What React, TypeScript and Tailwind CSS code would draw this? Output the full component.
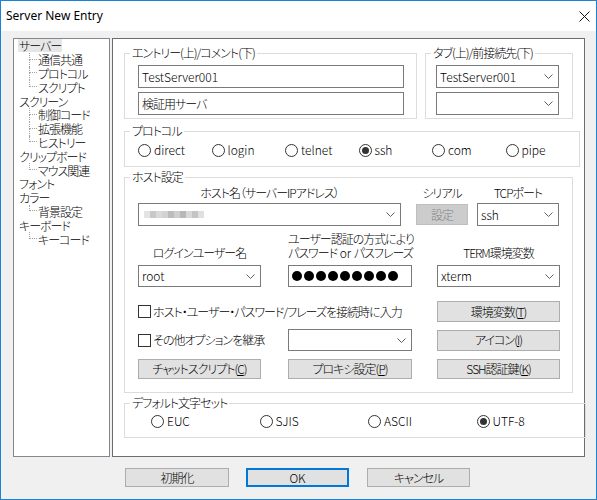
import React from "react";

const FONT = "font-['Noto_Sans_CJK_JP',sans-serif] font-light [font-feature-settings:'palt'] tracking-[-1px] whitespace-nowrap";

const TREE = [
  { label: "サーバー", children: ["通信共通", "プロトコル", "スクリプト"] },
  { label: "スクリーン", children: ["制御コード", "拡張機能", "ヒストリー"] },
  { label: "クリップボード", children: ["マウス関連"] },
  { label: "フォント", children: [] },
  { label: "カラー", children: ["背景設定"] },
  { label: "キーボード", children: ["キーコード"] },
];

const PROTOCOLS = ["direct", "login", "telnet", "ssh", "com", "pipe"];
const CHARSETS = ["EUC", "SJIS", "ASCII", "UTF-8"];
const BLUR = ["#e4e4e4", "#c8c8c8", "#dadada", "#d2d2d2", "#bcbcbc", "#cfcfcf", "#b8b8b8", "#d8d8d8", "#c4c4c4", "#e0e0e0"];

function Chevron() {
  return (
    <svg width="9" height="5" viewBox="0 0 9 5" className="shrink-0">
      <path d="M0.5 0.5 L4.5 4.5 L8.5 0.5" fill="none" stroke="#5f5f5f" strokeWidth="1" />
    </svg>
  );
}

function Combo({ value, w, h = "h-[23px]" }: { value?: React.ReactNode; w: string; h?: string }) {
  return (
    <div className={`flex ${w} ${h} items-center justify-between border border-[#7a7a7a] bg-white pl-[3px] pr-[5px]`}>
      <span className="tracking-normal">{value}</span>
      <Chevron />
    </div>
  );
}

function Radio({ label, checked }: { label: string; checked?: boolean }) {
  return (
    <div className="flex items-center gap-[3px]">
      <span className="flex h-[13px] w-[13px] items-center justify-center rounded-full border border-[#333] bg-white">
        {checked && <span className="h-[7px] w-[7px] rounded-full bg-[#333]" />}
      </span>
      <span className="tracking-normal">{label}</span>
    </div>
  );
}

function Check({ label }: { label: string }) {
  return (
    <div className="flex items-center gap-[2px]">
      <span className="h-[13px] w-[13px] shrink-0 border border-[#333] bg-white" />
      <span>{label}</span>
    </div>
  );
}

function Btn({ children, w, h = "h-[20px]" }: { children: React.ReactNode; w: string; h?: string }) {
  return (
    <div className={`flex ${w} ${h} items-center justify-center border border-[#adadad] bg-[#e1e1e1]`}>
      {children}
    </div>
  );
}

function Group({ label, className, children }: { label: string; className?: string; children: React.ReactNode }) {
  return (
    <fieldset className={`border border-[#dcdcdc] ${className ?? ""}`}>
      <legend className="ml-[5px] px-[2px] leading-[12px]">{label}</legend>
      {children}
    </fieldset>
  );
}

function Tree() {
  return (
    <div className="h-[419px] w-[97px] border border-[#828790] bg-white leading-[13px]">
      {TREE.map((node, i) => (
        <div key={node.label}>
          <div className="flex h-[13.8px] items-center pl-[4px]">
            <span className={i === 0 ? "bg-[#e6e6e6] px-[1px]" : "px-[1px]"}>{node.label}</span>
          </div>
          {node.children.map((c, j) => {
            const last = j === node.children.length - 1;
            return (
              <div key={c} className="flex h-[13.8px] items-stretch pl-[15px]">
                <div className="flex w-[8px] flex-col">
                  <div className="h-1/2 border-b border-l border-dotted border-[#a0a0a0]" />
                  <div className={last ? "h-1/2" : "h-1/2 border-l border-dotted border-[#a0a0a0]"} />
                </div>
                <span className="ml-[1px] flex items-center">{c}</span>
              </div>
            );
          })}
        </div>
      ))}
    </div>
  );
}

function HostGroup() {
  return (
    <Group label="ホスト設定" className="mt-[4px]">
      <div className="pl-[13px] pt-[0px] pb-[13px]">
        <div className="flex h-[20px] items-center">
          <span className="w-[263px] text-center">ホスト名（サーバーIPアドレス）</span>
          <span className="ml-[15px] w-[52px] text-center">シリアル</span>
          <span className="ml-[9px] w-[82px] text-center">TCPポート</span>
        </div>
        <div className="flex h-[23px] items-center">
          <div className="flex h-[23px] w-[263px] items-center justify-between border border-[#7a7a7a] bg-white pl-[5px] pr-[5px]">
            <div className="flex">
              {BLUR.map((c, i) => (
                <span key={i} className="h-[7px] w-[6px]" style={{ backgroundColor: c }} />
              ))}
            </div>
            <Chevron />
          </div>
          <div className="ml-[15px] flex h-[21px] w-[52px] items-center justify-center border border-[#bfbfbf] bg-[#cccccc] text-[#838383]">
            設定
          </div>
          <div className="ml-[9px]">
            <Combo value="ssh" w="w-[82px]" />
          </div>
        </div>
        <div className="flex h-[39px] items-end pb-[5px]">
          <span className="w-[123px] text-center">ログインユーザー名</span>
          <span className="ml-[27px] w-[124px] text-center leading-[14px]">
            ユーザー認証の方式により
            <br />
            パスワード<span className="tracking-normal"> or </span>パスフレーズ
          </span>
          <span className="ml-[25px] w-[123px] text-center">TERM環境変数</span>
        </div>
        <div className="flex items-center">
          <Combo value="root" w="w-[123px]" h="h-[22px]" />
          <div className="ml-[27px] flex h-[22px] w-[124px] items-center gap-[2px] border border-[#7a7a7a] bg-white pl-[3px]">
            {Array.from({ length: 9 }).map((_, i) => (
              <span key={i} className="h-[10px] w-[10px] rounded-full bg-black" />
            ))}
          </div>
          <div className="ml-[25px]">
            <Combo value="xterm" w="w-[123px]" h="h-[22px]" />
          </div>
        </div>
        <div className="mt-[14px] flex h-[21px] items-center">
          <div className="w-[274px]">
            <Check label="ホスト・ユーザー・パスワード/フレーズを接続時に入力" />
          </div>
          <div className="ml-[25px]">
            <Btn w="w-[123px]" h="h-[21px]">
              環境変数(<u>T</u>)
            </Btn>
          </div>
        </div>
        <div className="mt-[7px] flex h-[22px] items-center">
          <div className="w-[150px]">
            <Check label="その他オプションを継承" />
          </div>
          <Combo w="w-[124px]" h="h-[22px]" />
          <div className="ml-[25px]">
            <Btn w="w-[123px]" h="h-[21px]">
              アイコン(<u>I</u>)
            </Btn>
          </div>
        </div>
        <div className="mt-[8px] flex h-[20px] items-center">
          <Btn w="w-[123px]">
            チャットスクリプト(<u>C</u>)
          </Btn>
          <div className="ml-[27px]">
            <Btn w="w-[124px]">
              プロキシ設定(<u>P</u>)
            </Btn>
          </div>
          <div className="ml-[25px]">
            <Btn w="w-[123px]">
              SSH認証鍵(<u>K</u>)
            </Btn>
          </div>
        </div>
      </div>
    </Group>
  );
}

function MainPanel() {
  return (
    <div className="flex h-[419px] w-[473px] flex-col border border-[#6d6d6d] bg-white px-[11px] pt-[8px]">
      <div className="flex gap-[8px]">
        <Group label="エントリー(上)/コメント(下)" className="w-[293px]">
          <div className="flex flex-col gap-[4px] pl-[13px] pt-[6px] pb-[3px]">
            <div className="flex h-[23px] w-[266px] items-center border border-[#7a7a7a] bg-white pl-[3px] tracking-normal">TestServer001</div>
            <div className="flex h-[23px] w-[266px] items-center border border-[#7a7a7a] bg-white pl-[3px]">検証用サーバ</div>
          </div>
        </Group>
        <Group label="タブ(上)/前接続先(下)" className="w-[148px]">
          <div className="flex flex-col gap-[4px] pl-[10px] pt-[6px] pb-[3px]">
            <Combo value="TestServer001" w="w-[123px]" />
            <Combo w="w-[123px]" />
          </div>
        </Group>
      </div>
      <Group label="プロトコル" className="mt-[6px]">
        <div className="grid grid-cols-[repeat(6,73.5px)] pl-[13px] pt-[6px] pb-[9px]">
          {PROTOCOLS.map((p) => (
            <Radio key={p} label={p} checked={p === "ssh"} />
          ))}
        </div>
      </Group>
      <HostGroup />
      <Group label="デフォルト文字セット" className="mt-[4px]">
        <div className="grid grid-cols-[repeat(4,108.5px)] pl-[26px] pt-[5px] pb-[9px]">
          {CHARSETS.map((c) => (
            <Radio key={c} label={c} checked={c === "UTF-8"} />
          ))}
        </div>
      </Group>
    </div>
  );
}

export default function App() {
  return (
    <div className={`flex h-[500px] w-[597px] flex-col border border-[#1883d7] bg-[#f0f0f0] text-[12px] leading-[14px] text-black ${FONT}`}>
      <div className="flex h-[30px] shrink-0 items-center justify-between bg-white pl-[5px] pr-[6px]">
        <span className="font-['Noto_Sans',sans-serif] text-[12px] font-normal tracking-normal">Server New Entry</span>
        <svg width="11" height="11" viewBox="0 0 11 11">
          <path d="M0.5 0.5 L10.5 10.5 M10.5 0.5 L0.5 10.5" stroke="#111" strokeWidth="1" />
        </svg>
      </div>
      <div className="flex gap-[2px] pl-[12px] pt-[7px]">
        <Tree />
        <MainPanel />
      </div>
      <div className="mt-[11px] flex pl-[124px]">
        <Btn w="w-[104px]" h="h-[19px]">初期化</Btn>
        <div className="ml-[17px] flex h-[19px] w-[103px] items-center justify-center border-2 border-[#0078d7] bg-[#e1e1e1] tracking-normal">OK</div>
        <div className="ml-[18px]">
          <Btn w="w-[103px]" h="h-[19px]">キャンセル</Btn>
        </div>
      </div>
    </div>
  );
}
